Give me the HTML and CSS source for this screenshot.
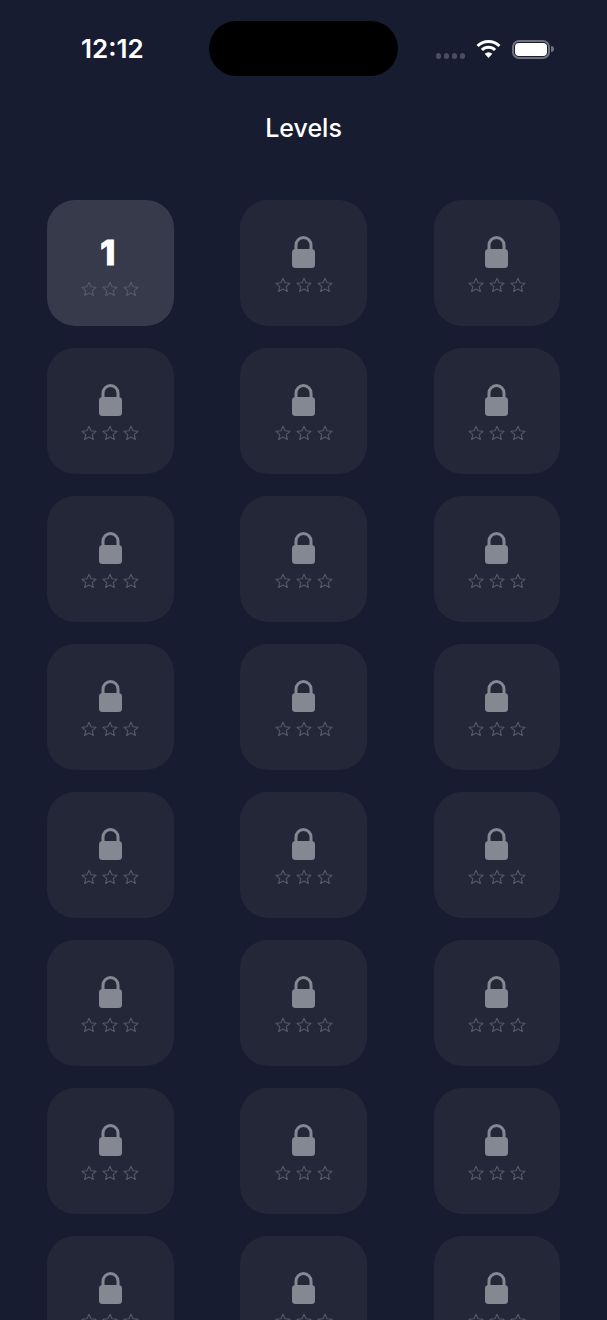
FILE: index.html
```html
<!DOCTYPE html>
<html>
<head>
  <title>Levels</title>
  <link rel="stylesheet" href="styles.css">
</head>
<body>
  <svg class="defs" width="0" height="0">
    <symbol id="lock" viewBox="0 0 23 32">
      <path d="M4 15V9a7.5 7.5 0 0 1 15 0V15" fill="none" stroke="currentColor" stroke-width="3"/>
      <rect x="0" y="13" width="23" height="19" rx="3.5" fill="currentColor"/>
    </symbol>
    <symbol id="star" viewBox="0 0 16 16">
      <path d="M8 1.2l2 4.6 5 .5-3.8 3.3 1.2 4.9L8 12l-4.4 2.5 1.2-4.9L1 6.3l5-.5z" fill="none" stroke="currentColor" stroke-width="1.1" stroke-linejoin="round"/>
    </symbol>
  </svg>

  <div class="island"></div>

  <header class="status-bar">
    <span class="time">12:12</span>
    <div class="status-icons">
      <div class="signal"><i></i><i></i><i></i><i></i></div>
      <svg class="wifi" width="25" height="19" viewBox="0 0 25 19">
        <path d="M1.6 7a15.5 15.5 0 0 1 21.8 0" fill="none" stroke="#fff" stroke-width="3"/>
        <path d="M5.9 11a9.4 9.4 0 0 1 13.2 0" fill="none" stroke="#fff" stroke-width="3"/>
        <path d="M12.5 19l-3.8-4.2a5.3 5.3 0 0 1 7.6 0z" fill="#fff"/>
      </svg>
      <div class="battery"><div class="battery-fill"></div></div>
      <div class="battery-cap"></div>
    </div>
  </header>

  <h1 class="title">Levels</h1>

  <main class="level-grid" id="levelGrid">
    <div class="level current">
      <span class="level-num">1</span>
      <div class="stars"><svg><use href="#star"/></svg><svg><use href="#star"/></svg><svg><use href="#star"/></svg></div>
    </div>
  </main>

  <script>
    const levelGrid = document.getElementById('levelGrid');
    const star = '<svg><use href="#star"/></svg>';

    for (let i = 0; i < 23; i++) {
      const level = document.createElement('div');
      level.className = 'level';
      level.innerHTML = `<svg class="lock"><use href="#lock"/></svg><div class="stars">${star}${star}${star}</div>`;
      levelGrid.appendChild(level);
    }
  </script>
</body>
</html>
```

FILE: styles.css
```css
html, body { margin: 0; height: 1320px; overflow: hidden; }
body { position: relative; background-color: #181c30; font-family: Inter, "Liberation Sans", sans-serif; color: #fff; }
.defs { position: absolute; }

.island { position: absolute; left: 209px; top: 21px; width: 189px; height: 55px; background-color: #000; border-radius: 28px; }

.status-bar { display: flex; justify-content: space-between; align-items: center; height: 28px; padding: 35px 53px 0 81px; }
.time { font-size: 26px; font-weight: 600; line-height: 28px; }
.status-icons { display: flex; align-items: center; }
.signal { display: flex; gap: 2.5px; margin-top: 14px; margin-right: 11px; }
.signal i { width: 5.5px; height: 5.5px; border-radius: 50%; background-color: #4a4d5e; }
.wifi { margin-right: 11px; margin-top: -1px; }
.battery { box-sizing: border-box; width: 38px; height: 19px; padding: 1px; border: 2px solid #6f717d; border-radius: 7px; }
.battery-fill { height: 100%; background-color: #fff; border-radius: 4px; }
.battery-cap { width: 3px; height: 6px; margin-left: 1px; background-color: #6f717d; border-radius: 0 3px 3px 0; }

.title { margin: 0; padding-top: 51px; font-size: 25px; font-weight: 500; line-height: 28px; text-align: center; }

.level-grid { display: grid; grid-template-columns: repeat(3, 126.5px); justify-content: space-between; row-gap: 22px; padding: 58px 47px 0; }
.level { display: flex; flex-direction: column; align-items: center; justify-content: center; height: 126px; padding-top: 3px; box-sizing: border-box; background-color: #242737; border-radius: 28px; }
.level.current { background-color: #373a4b; padding-top: 5px; }
.level-num { margin-right: 5px; font-size: 34px; font-weight: 800; line-height: 36px; -webkit-text-stroke: 1px #fff; }
.lock { width: 23px; height: 32px; color: #858793; }

.stars { display: flex; gap: 5px; margin-top: 9px; color: #565968; }
.current .stars { margin-top: 10px; }
.stars svg { width: 16px; height: 16px; }
```
